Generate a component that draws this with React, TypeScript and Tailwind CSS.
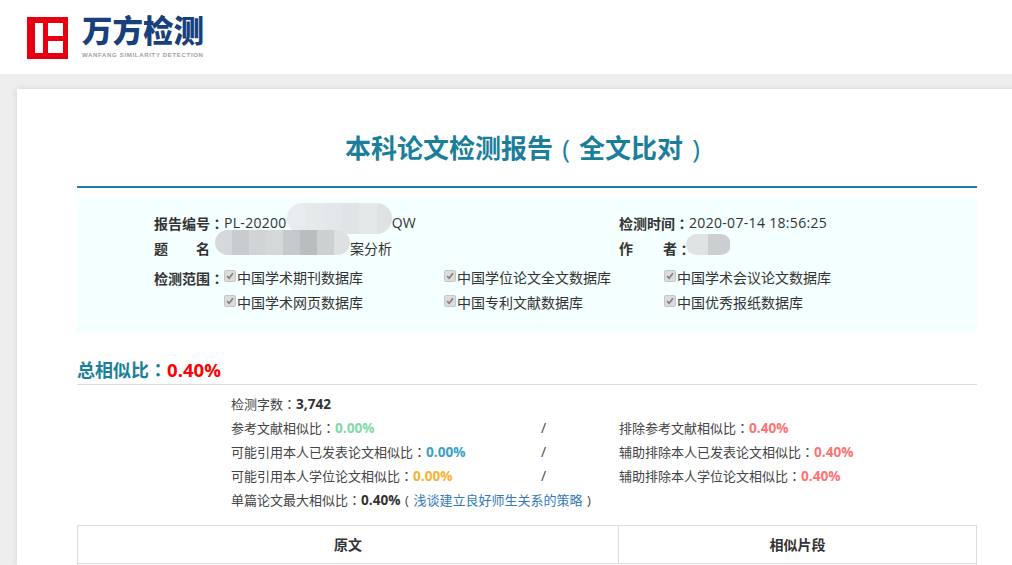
const font = { fontFamily: '"Open Sans", "Noto Sans CJK SC", sans-serif' };
const tc = { fontFamily: '"Noto Sans CJK TC", sans-serif' };

function P() {
  return <span style={tc}>：</span>;
}

function Paren({ c }: { c: string }) {
  return <span className="inline-block w-[1em] text-center font-normal">{c}</span>;
}

function Check({ label }: { label: string }) {
  return (
    <div className="flex items-start w-[220px] h-[25px]">
      <span className="flex items-center justify-center w-[12px] h-[12px] mr-[2px] rounded-[2px] bg-[#dcdcdc] border border-[#c6c6c6] shrink-0">
        <svg viewBox="0 0 12 12" className="w-[10px] h-[10px]">
          <path d="M2.5 6.2 L5 8.8 L9.6 2.8" fill="none" stroke="#808080" strokeWidth="2" />
        </svg>
      </span>
      <span className="text-[14px] leading-[16px] -ml-[1px] text-[#333]">{label}</span>
    </div>
  );
}

function Mosaic({ colors, w, h, cell }: { colors: string[]; w: string; h: string; cell: string }) {
  return (
    <span className={`inline-flex overflow-hidden rounded-full align-middle ${w} ${h}`}>
      {colors.map((c, i) => (
        <span key={i} className={`h-full shrink-0 ${cell}`} style={{ background: c }} />
      ))}
    </span>
  );
}

function Num({ color, children }: { color: string; children: string }) {
  return <b className={`text-[13.6px] ${color}`}>{children}</b>;
}

export default function App() {
  return (
    <div className="w-[1012px] h-[565px] overflow-hidden bg-[#eeeeee]" style={font}>
      <header className="h-[74px] bg-white flex items-start pl-[27px] pt-[17px]">
        <svg viewBox="0 0 41 42" className="w-[41px] h-[42px] shrink-0">
          <rect width="41" height="42" fill="#e60012" />
          <rect x="8" y="6" width="8" height="30" fill="#fff" />
          <rect x="21" y="6" width="15" height="13" fill="#fff" />
          <rect x="21" y="24" width="15" height="12" fill="#fff" />
        </svg>
        <div className="ml-[14px] w-[124px]">
          <div className="text-[30.5px] leading-[30px] font-black text-[#17407c] whitespace-nowrap -mt-[2px]">万方检测</div>
          <div className="text-[6px] leading-[8px] mt-[6px] font-bold text-[#a0a0a0] tracking-[0.68px] whitespace-nowrap" style={{ fontFamily: '"Liberation Sans", sans-serif' }}>
            WANFANG SIMILARITY DETECTION
          </div>
        </div>
      </header>

      <main className="ml-[17px] mt-[15px] w-[1020px] h-[476px] bg-white shadow-[0_0_6px_rgba(0,0,0,0.12)] px-[60px]">
        <div className="w-[900px]">
          <h1 className="pt-[39px] h-[99px] border-b-2 border-[#1d7f9c] text-center text-[26px] leading-[40px] font-bold text-[#1b7f9c]">
            本科论文检测报告<Paren c="(" />全文比对<Paren c=")" />
          </h1>

          <section className="mt-[10px] h-[135px] bg-[#f4ffff] pl-[77px] pt-[14px] text-[14px] text-[#333]">
            <div className="flex h-[24px] leading-[22px]">
              <div className="w-[465px] flex">
                <b className="w-[70px]">报告编号<P /></b>
                <span className="whitespace-nowrap tracking-[0.3px]">PL-20200</span>
                <Mosaic w="w-[105px]" h="h-[31px] -mt-[9px]" cell="w-[18px]" colors={['#e8ecee', '#e4e9ea', '#e2e7e9', '#dfe5e6', '#e3e8e9', '#dde3e5']} />
                <span className="tracking-[0.3px]">QW</span>
              </div>
              <div className="flex">
                <b className="w-[70px]">检测时间<P /></b>
                <span className="tracking-[0.32px]">2020-07-14 18:56:25</span>
              </div>
            </div>
            <div className="flex h-[24px] leading-[26px]">
              <div className="w-[465px] flex">
                <b className="w-[56px] flex justify-between">
                  <span>题</span>
                  <span>名</span>
                </b>
                <Mosaic w="w-[135px] ml-[5px]" h="h-[25px] -mt-[6px]" cell="w-[17px]" colors={['#d5d9db', '#c8cccf', '#d0d4d6', '#d4d8d9', '#c5c9cb', '#b9bdbf', '#ccd0d1', '#dde1e2']} />
                <span>案分析</span>
              </div>
              <div className="flex">
                <b className="w-[58px] flex justify-between">
                  <span>作</span>
                  <span>者</span>
                </b>
                <b className="w-[8px]"><P /></b>
                <Mosaic w="w-[45px] ml-[1px]" h="h-[21px] -mt-[2px]" cell="w-[22px]" colors={['#dfe3e4', '#cbcfd1']} />
              </div>
            </div>
            <div className="flex mt-[8px]">
              <b className="w-[70px] leading-[20px] shrink-0">检测范围<P /></b>
              <div className="flex flex-wrap w-[680px] pt-[2px]">
                <Check label="中国学术期刊数据库" />
                <Check label="中国学位论文全文数据库" />
                <Check label="中国学术会议论文数据库" />
                <Check label="中国学术网页数据库" />
                <Check label="中国专利文献数据库" />
                <Check label="中国优秀报纸数据库" />
              </div>
            </div>
          </section>

          <h2 className="mt-[23px] h-[29px] border-b border-[#dddddd] text-[18px] leading-[26px] font-bold text-[#1b7f9c]">
            总相似比<P /><span className="text-[#ff0000] text-[18.6px]">0.40%</span>
          </h2>

          <section className="mt-[7px] pl-[154px] text-[13px] leading-[24px] text-[#444] grid grid-cols-[310px_78px_1fr]">
            <div className="col-span-3">检测字数<P /><Num color="text-[#333]">3,742</Num></div>
            <div>参考文献相似比<P /><Num color="text-[#82d8a8]">0.00%</Num></div>
            <div className="text-[14px]">/</div>
            <div>排除参考文献相似比<P /><Num color="text-[#ff7373]">0.40%</Num></div>
            <div>可能引用本人已发表论文相似比<P /><Num color="text-[#3da0cc]">0.00%</Num></div>
            <div className="text-[14px]">/</div>
            <div>辅助排除本人已发表论文相似比<P /><Num color="text-[#ff7373]">0.40%</Num></div>
            <div>可能引用本人学位论文相似比<P /><Num color="text-[#f8b133]">0.00%</Num></div>
            <div className="text-[14px]">/</div>
            <div>辅助排除本人学位论文相似比<P /><Num color="text-[#ff7373]">0.40%</Num></div>
            <div className="col-span-3">
              单篇论文最大相似比<P /><Num color="text-[#333]">0.40%</Num><Paren c="(" /><span className="text-[#337ab7]">浅谈建立良好师生关系的策略</span><Paren c=")" />
            </div>
          </section>

          <div className="mt-[13px] grid grid-cols-[541px_1fr] border border-[#dddddd] h-[60px] text-[14px] font-bold text-[#333]">
            <div className="h-[38px] border-b border-r border-[#dddddd] flex items-center justify-center">原文</div>
            <div className="h-[38px] border-b border-[#dddddd] flex items-center justify-center">相似片段</div>
          </div>
        </div>
      </main>
    </div>
  );
}
